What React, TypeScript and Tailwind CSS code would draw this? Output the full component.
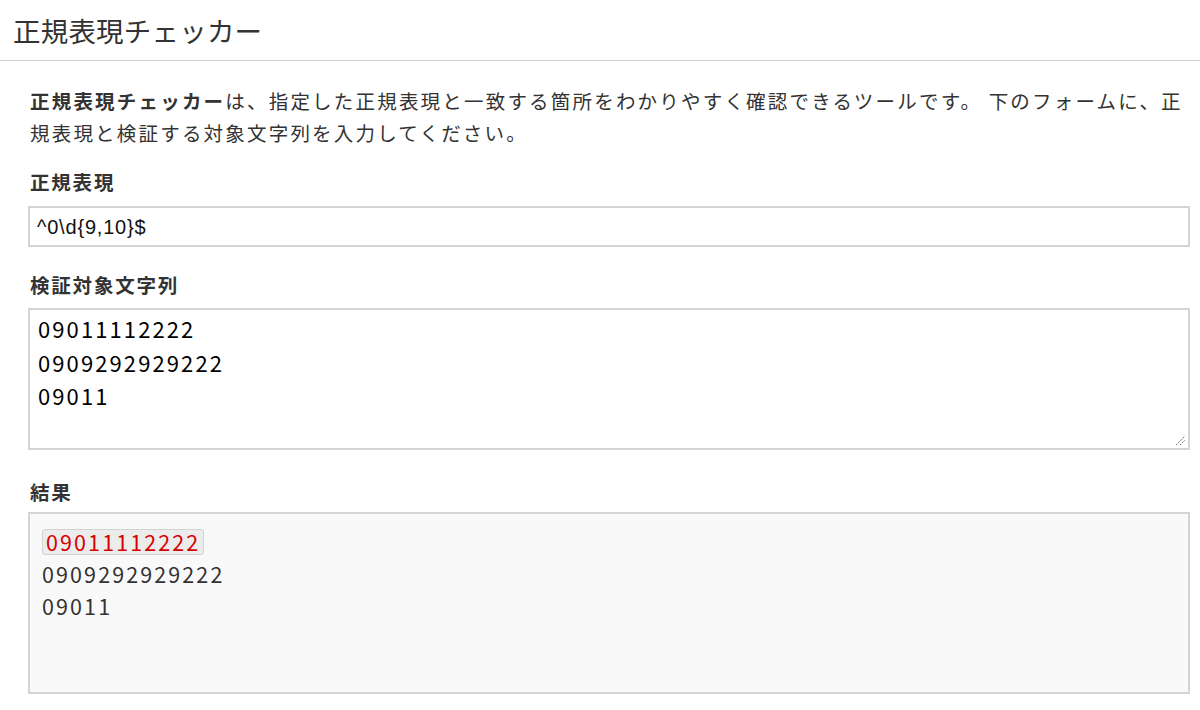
const jp = "font-['Noto_Sans_CJK_JP','Noto_Sans',sans-serif]";

function Label({ children }: { children: string }) {
  return (
    <div className={`${jp} text-[19.5px] leading-[32px] font-bold tracking-[1.8px] text-[#333]`}>
      {children}
    </div>
  );
}

const sample = ['09011112222', '0909292929222', '09011'];
const pattern = /^0\d{9,10}$/;

export default function App() {
  return (
    <div className="w-[1200px] h-[710px] bg-white overflow-hidden">
      <header className="h-[61px] border-b border-[#cfcfcf] pl-[13px] pt-[13px]">
        <h1 className={`${jp} text-[27.5px] leading-[34px] font-normal tracking-[0.2px] text-[#333]`}>
          正規表現チェッカー
        </h1>
      </header>

      <main className="pl-[28px] pr-[10px]">
        <p className={`${jp} mt-[24px] pl-[2px] text-[19.5px] leading-[32px] tracking-[2.2px] text-[#333]`}>
          <strong className="font-bold">正規表現チェッカー</strong>は、指定した正規表現と一致する箇所をわかりやすく確認できるツールです。 下のフォームに、正規表現と検証する対象文字列を入力してください。
        </p>

        <div className="mt-[17px] pl-[2px]">
          <Label>正規表現</Label>
        </div>
        <div className="mt-[8px] h-[41px] border-2 border-[#d4d4d4] flex items-center pl-[7px]">
          <span className="font-['Liberation_Sans',sans-serif] text-[20px] tracking-[0.8px] text-[#111]">
            ^0\d{'{'}9,10{'}'}$
          </span>
        </div>

        <div className="mt-[22px] pl-[2px]">
          <Label>検証対象文字列</Label>
        </div>
        <div className="relative mt-[7px] h-[142px] border-2 border-[#d4d4d4] pl-[8px] pt-[2px]">
          {sample.map((s) => (
            <div key={s} className={`${jp} text-[22px] leading-[33.5px] tracking-[2.1px] text-black`}>
              {s}
            </div>
          ))}
          <svg className="absolute right-[2px] bottom-[2px]" width="11" height="11" viewBox="0 0 11 11">
            <path d="M1 10 L10 1 M5 10 L10 5" stroke="#666" strokeWidth="1" strokeDasharray="1.5 1" />
          </svg>
        </div>

        <div className="mt-[26px] pl-[2px]">
          <Label>結果</Label>
        </div>
        <div className="mt-[4px] h-[182px] border-2 border-[#d4d4d4] bg-[#f9f9f9] pl-[12px] pt-[12px]">
          {sample.map((s) =>
            pattern.test(s) ? (
              <div key={s} className="h-[32px] flex items-center">
                <span className={`${jp} leading-[24px] px-[3px] border border-[#d2d2d2] rounded-[3px] bg-[#ececec] text-[21.5px] tracking-[2.1px] text-[#d70000]`}>
                  {s}
                </span>
              </div>
            ) : (
              <div key={s} className={`${jp} h-[32px] flex items-center text-[21.5px] tracking-[2.1px] text-[#333]`}>
                {s}
              </div>
            )
          )}
        </div>
      </main>
    </div>
  );
}
